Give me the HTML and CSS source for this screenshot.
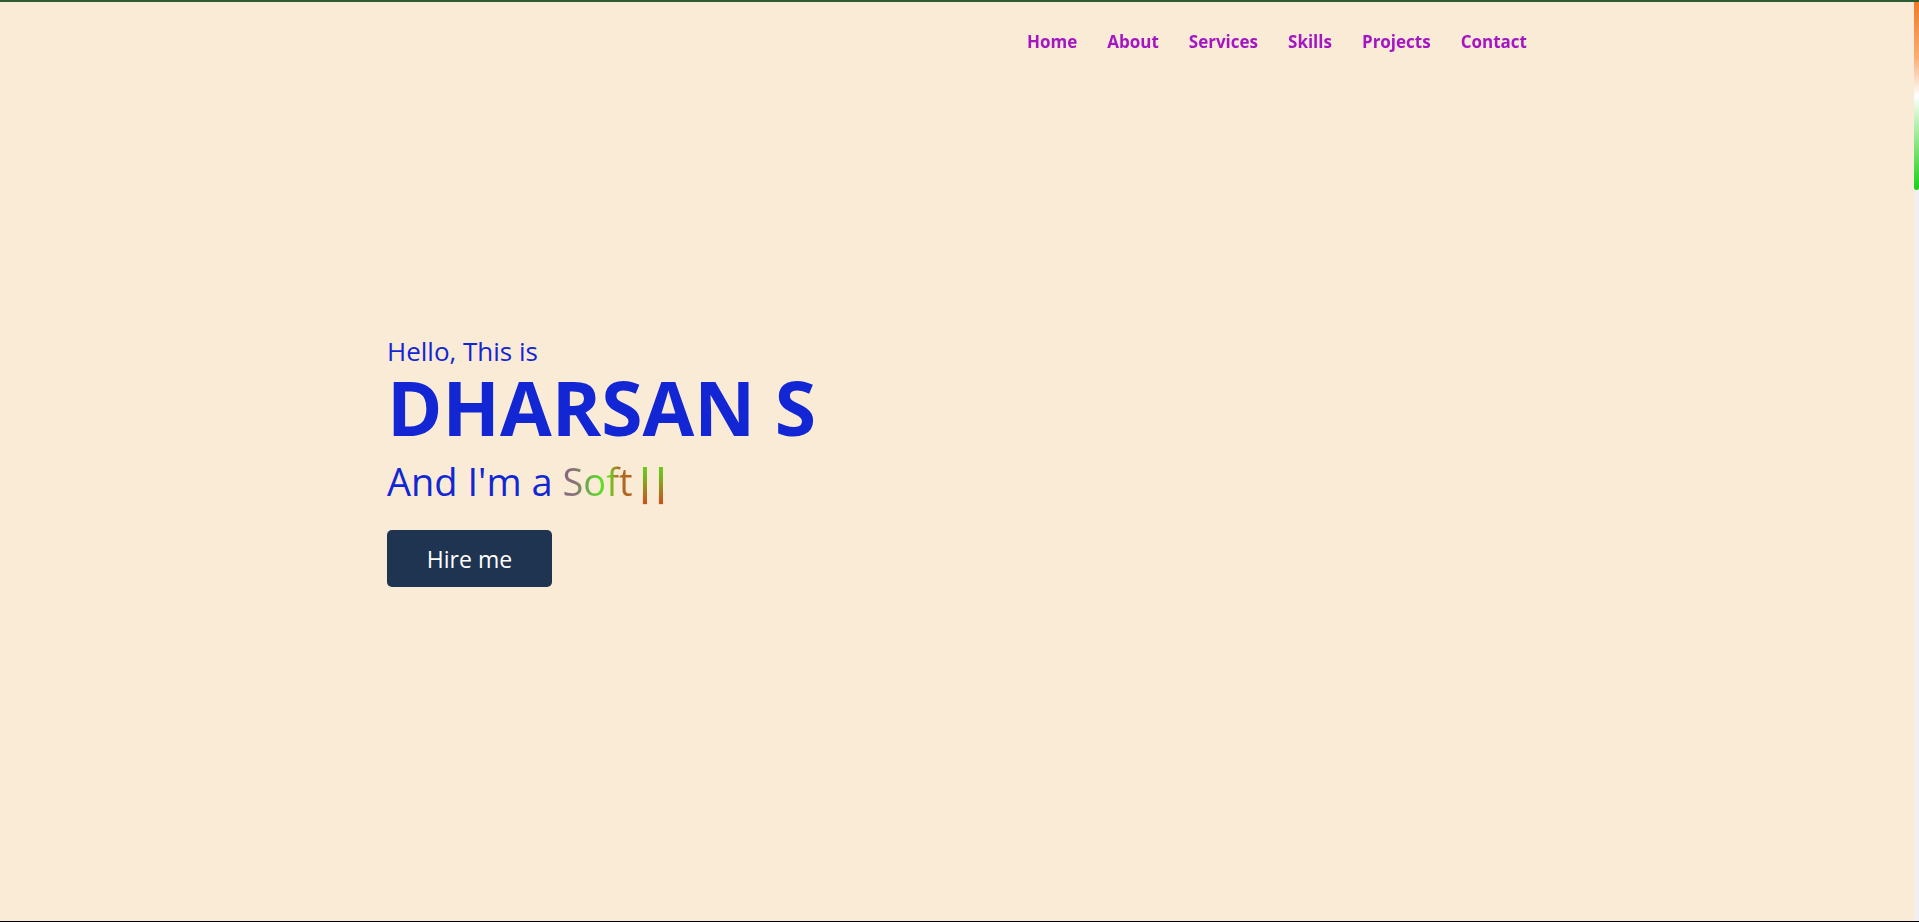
FILE: index.html
```html
<!DOCTYPE html>
<html lang="en">
<head>
<meta charset="utf-8">
<title>Dharsan S - Portfolio</title>
<link rel="stylesheet" href="styles.css">
</head>
<body>
<header class="site-header">
  <div class="container header-inner">
    <nav class="menu">
      <a href="#home">Home</a>
      <a href="#about">About</a>
      <a href="#services">Services</a>
      <a href="#skills">Skills</a>
      <a href="#projects">Projects</a>
      <a href="#contact">Contact</a>
    </nav>
  </div>
</header>
<main>
  <section class="home" id="home">
    <div class="container">
      <div class="home-content">
        <div class="text-1">Hello, This is</div>
        <div class="text-2">DHARSAN S</div>
        <div class="text-3">And I'm a <span class="typing">Soft</span><span class="cursor">||</span></div>
        <a class="hire" href="#contact">Hire me</a>
      </div>
    </div>
  </section>
</main>
<div class="scrollbar" aria-hidden="true"><div class="scrollbar-thumb"></div></div>
</body>
</html>
```
FILE: styles.css
```css
* { box-sizing: border-box; }
html, body { height: 100%; }
body {
  margin: 0;
  padding-right: 5px;
  background: #faebd7;
  font-family: "Open Sans", "Noto Sans", sans-serif;
  overflow: hidden;
}
body::before {
  content: "";
  position: fixed;
  left: 0;
  right: 0;
  top: 0;
  height: 2px;
  background: #2e5b32;
  z-index: 30;
}
body::after {
  content: "";
  position: fixed;
  left: 0;
  right: 0;
  bottom: 0;
  height: 1px;
  background: #000;
  z-index: 30;
}
.container {
  width: 1140px;
  margin: 0 auto;
}
.site-header {
  position: fixed;
  top: 0;
  left: 0;
  right: 5px;
  z-index: 10;
}
.header-inner {
  display: flex;
  justify-content: flex-end;
  padding-top: 30px;
}
.menu {
  display: flex;
  gap: 30px;
}
.menu a {
  color: #a515c2;
  text-decoration: none;
  font-weight: 700;
  font-size: 17px;
  line-height: 24px;
}
.home {
  height: 100vh;
  display: flex;
  align-items: center;
}
.home-content {
  display: flex;
  flex-direction: column;
  align-items: flex-start;
  color: #1227d3;
  margin-top: -2px;
}
.text-1 {
  font-size: 26px;
  line-height: 36px;
}
.text-2 {
  font-size: 75px;
  font-weight: 700;
  line-height: 76px;
}
.text-3 {
  margin-top: 12px;
  font-size: 38px;
  line-height: 48px;
}
.typing {
  background: linear-gradient(90deg, #8a6680 0%, #887078 18%, #6cb048 38%, #5ee022 58%, #70d020 68%, #a86e22 80%, #b8601e 100%);
  -webkit-background-clip: text;
  background-clip: text;
  color: transparent;
}
.cursor {
  display: inline-block;
  letter-spacing: -5px;
  margin-left: 2px;
  font-weight: 700;
  background: linear-gradient(180deg, #5fe020 0%, #7cb020 45%, #d04a1e 100%);
  -webkit-background-clip: text;
  background-clip: text;
  color: transparent;
}
.hire {
  margin-top: 25px;
  width: 165px;
  height: 57px;
  display: flex;
  align-items: center;
  justify-content: center;
  background: #1f3451;
  color: #ffffff;
  text-decoration: none;
  font-size: 23px;
  border-radius: 5px;
}
.scrollbar {
  position: fixed;
  top: 0;
  right: 0;
  width: 5px;
  height: 100vh;
  background: #efeef0;
  z-index: 20;
}
.scrollbar-thumb {
  margin-top: 2px;
  height: 188px;
  border-radius: 0 0 3px 3px;
  background: linear-gradient(#f07a28 0%, #f8b078 30%, #ffffff 50%, #b8f0b0 65%, #18d018 100%);
}
```
